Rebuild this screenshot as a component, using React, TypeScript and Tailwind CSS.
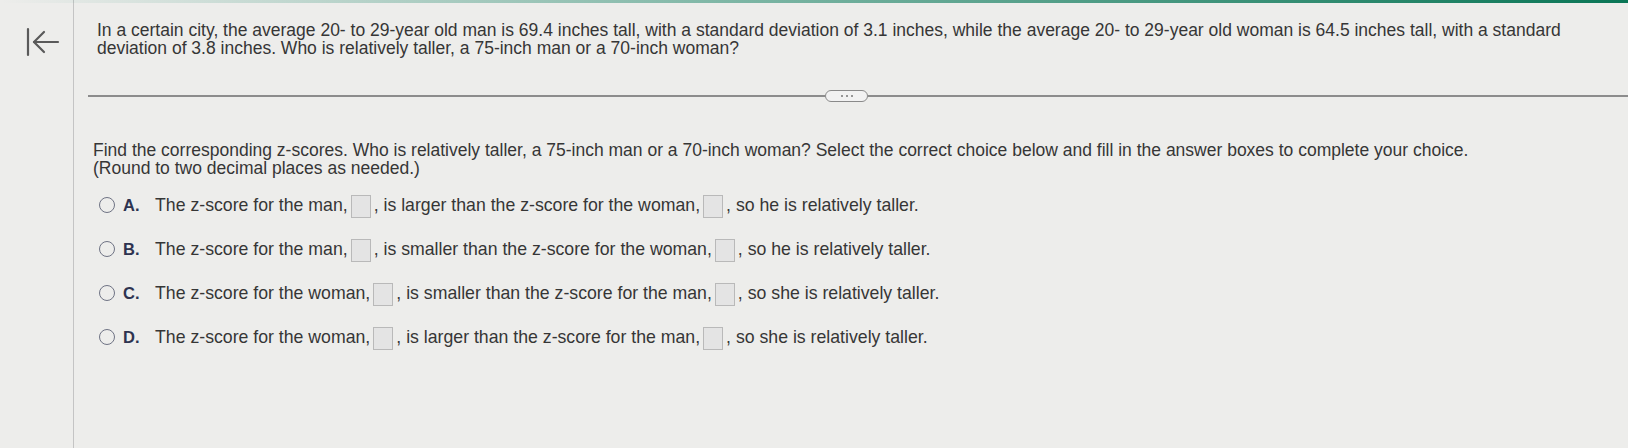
import React from "react";

function Box() {
  return (
    <span className="inline-block w-[20px] h-[23px] align-middle mx-[3px] border border-[#b9b9b9] bg-[#e4e4e4]" />
  );
}

function Option({ letter, parts }: { letter: string; parts: [string, string, string] }) {
  return (
    <div className="h-[44px] flex items-center">
      <span className="w-[16px] h-[16px] rounded-full border-[1.5px] border-[#6f7384] shrink-0" />
      <span className="ml-[8px] w-[32px] text-[16.5px] font-bold text-[#2e3350]">{letter}</span>
      <span className="text-[17.7px] text-[#363636] whitespace-nowrap">
        {parts[0]}
        <Box />
        {parts[1]}
        <Box />
        {parts[2]}
      </span>
    </div>
  );
}

export default function App() {
  return (
    <div className="relative w-[1628px] h-[448px] overflow-hidden flex bg-[#ededeb] text-[#363636] font-['Liberation_Sans',Arial,sans-serif]">
      <div className="absolute top-0 left-0 right-0 h-[3px] bg-gradient-to-r from-transparent via-[#0d7f5f]/50 via-45% to-[#0a7656]" />
      <aside className="w-[74px] shrink-0 border-r-[1.5px] border-[#c4c4c4] pl-[26px] pt-[27px]">
        <svg width="34" height="30" viewBox="0 0 34 30" fill="none" stroke="#5a5a5a" strokeWidth="2.2" strokeLinecap="round" strokeLinejoin="round">
          <path d="M2 2 V28" />
          <path d="M32 15 H8" />
          <path d="M18 5 L8 15 L18 25" />
        </svg>
      </aside>
      <main className="flex-1 flex flex-col">
        <p className="pl-[23px] pt-[21px] pr-[20px] text-[17.5px] leading-[18px]">
          In a certain city, the average 20- to 29-year old man is 69.4 inches tall, with a standard deviation of 3.1 inches, while the average 20- to 29-year old woman is 64.5 inches tall, with a standard deviation of 3.8 inches. Who is relatively taller, a 75-inch man or a 70-inch woman?
        </p>
        <div className="mt-[33px] ml-[14px] flex items-center h-[12px]">
          <div className="w-[737px] h-[1.5px] bg-[#8c8c8c]" />
          <div className="w-[43px] h-[12px] rounded-full border-[1.5px] border-[#8a8a8a] bg-[#f2f2f2] flex items-center justify-center gap-[3px]">
            <span className="w-[2px] h-[2px] rounded-full bg-[#777]" />
            <span className="w-[2px] h-[2px] rounded-full bg-[#777]" />
            <span className="w-[2px] h-[2px] rounded-full bg-[#777]" />
          </div>
          <div className="flex-1 h-[1.5px] bg-[#8c8c8c]" />
        </div>
        <p className="pl-[19px] mt-[39px] pr-[40px] text-[17.5px] leading-[18px]">
          Find the corresponding z-scores. Who is relatively taller, a 75-inch man or a 70-inch woman? Select the correct choice below and fill in the answer boxes to complete your choice.
          <br />
          (Round to two decimal places as needed.)
        </p>
        <div className="pl-[25px] mt-[6px] flex flex-col">
          <Option letter="A." parts={["The z-score for the man,", ", is larger than the z-score for the woman,", ", so he is relatively taller."]} />
          <Option letter="B." parts={["The z-score for the man,", ", is smaller than the z-score for the woman,", ", so he is relatively taller."]} />
          <Option letter="C." parts={["The z-score for the woman,", ", is smaller than the z-score for the man,", ", so she is relatively taller."]} />
          <Option letter="D." parts={["The z-score for the woman,", ", is larger than the z-score for the man,", ", so she is relatively taller."]} />
        </div>
      </main>
    </div>
  );
}
